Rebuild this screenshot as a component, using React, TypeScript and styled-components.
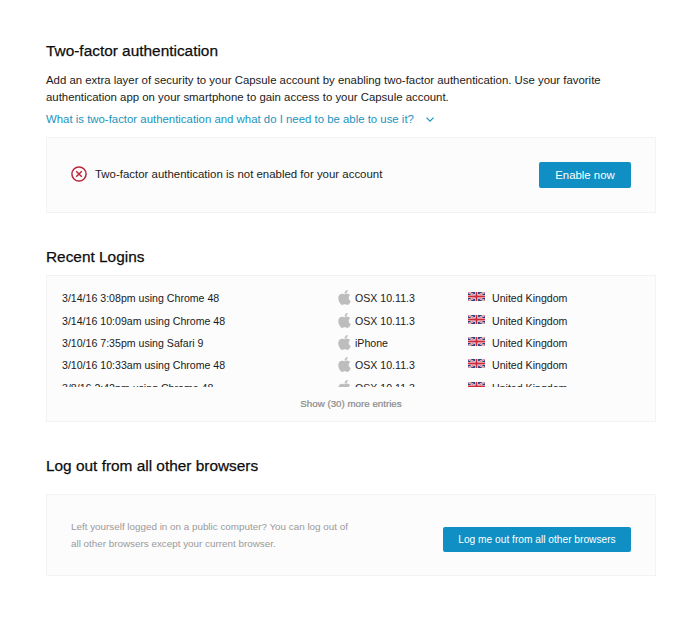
import React from 'react';
import styled, { createGlobalStyle } from 'styled-components';
import { FaApple } from 'react-icons/fa';

const Global = createGlobalStyle`
  html, body { margin: 0; padding: 0; background: #fff; }
  body { font-family: "Liberation Sans", Arial, sans-serif; color: #1c1c1c; }
`;

const Page = styled.main`
  width: 610px;
  padding: 42px 44px 0 46px;
`;

const Section = styled.section<{ $gap: number }>`
  margin-bottom: ${(p) => p.$gap}px;
`;

const Heading = styled.h2<{ $below: number }>`
  margin: 0 0 ${(p) => p.$below}px;
  font-size: 15.4px;
  line-height: 18px;
  font-weight: 400;
  color: #0d0d0d;
  -webkit-text-stroke: 0.25px #0d0d0d;
`;

const Intro = styled.p`
  margin: 0;
  font-size: 11.4px;
  line-height: 17px;
  color: #1a1a1a;
`;

const InfoLink = styled.a`
  display: flex;
  align-items: center;
  gap: 12px;
  margin: 5px 0 9px;
  font-size: 11.4px;
  line-height: 17px;
  color: #1a93bd;
  text-decoration: none;
`;

const Panel = styled.div<{ $height: number }>`
  box-sizing: border-box;
  height: ${(p) => p.$height}px;
  background: #fcfcfc;
  border: 1px solid #f3f3f3;
`;

const ActionPanel = styled(Panel)`
  display: flex;
  align-items: center;
  justify-content: space-between;
  padding: 0 24px;
`;

const Status = styled.div`
  display: flex;
  align-items: center;
  gap: 8px;
  margin-top: -3px;
  font-size: 11.45px;
  color: #1a1a1a;
`;

const Button = styled.button<{ $height: number; $width: number; $size: number; $drop: number }>`
  box-sizing: border-box;
  flex: none;
  width: ${(p) => p.$width}px;
  height: ${(p) => p.$height}px;
  margin-top: ${(p) => p.$drop}px;
  padding: 0;
  border: 0;
  border-radius: 2px;
  background: #0f8fc4;
  color: #fff;
  font: ${(p) => p.$size}px "Liberation Sans", Arial, sans-serif;
  white-space: nowrap;
`;

const Rows = styled.div`
  height: 100px;
  margin-top: 11px;
  padding-left: 15px;
  overflow: hidden;
`;

const Row = styled.div`
  display: grid;
  grid-template-columns: 276px 130px 1fr;
  height: 22.4px;
  align-items: center;
  font-size: 10.6px;
  color: #1a1a1a;
`;

const Cell = styled.span`
  display: flex;
  align-items: center;
`;

const AppleMark = styled(FaApple)`
  width: 13px;
  height: 17px;
  margin-right: 4px;
  margin-top: -1px;
  color: #bdbdbd;
`;

const FlagMark = styled.svg`
  width: 17px;
  height: 9px;
  margin-right: 7px;
  margin-top: -3px;
`;

const ShowMore = styled.div`
  margin-top: 10px;
  text-align: center;
  font-size: 9.75px;
  line-height: 14px;
  color: #8a8a8a;
  -webkit-text-stroke: 0.2px #8a8a8a;
`;

const Note = styled.p`
  margin: 0;
  font-size: 9.85px;
  line-height: 17px;
  color: #9a9a9a;
`;

const Flag = () => (
  <FlagMark viewBox="0 0 60 32" preserveAspectRatio="none" aria-hidden="true">
    <rect width="60" height="32" fill="#2b3f7e" />
    <path d="M0 0L60 32M60 0L0 32" stroke="#fff" strokeWidth="7" />
    <path d="M0 0L60 32M60 0L0 32" stroke="#cc2b3c" strokeWidth="2.5" />
    <path d="M30 0V32M0 16H60" stroke="#fff" strokeWidth="11" />
    <path d="M30 0V32M0 16H60" stroke="#cc2b3c" strokeWidth="6.5" />
  </FlagMark>
);

const logins = [
  ['3/14/16 3:08pm using Chrome 48', 'OSX 10.11.3'],
  ['3/14/16 10:09am using Chrome 48', 'OSX 10.11.3'],
  ['3/10/16 7:35pm using Safari 9', 'iPhone'],
  ['3/10/16 10:33am using Chrome 48', 'OSX 10.11.3'],
  ['3/8/16 2:42pm using Chrome 48', 'OSX 10.11.3'],
];

export default function App() {
  return (
    <Page>
      <Global />
      <Section $gap={35}>
        <Heading $below={12}>Two-factor authentication</Heading>
        <Intro>
          Add an extra layer of security to your Capsule account by enabling two-factor authentication. Use your favorite
          <br />
          authentication app on your smartphone to gain access to your Capsule account.
        </Intro>
        <InfoLink href="#">
          What is two-factor authentication and what do I need to be able to use it?
          <svg width="8" height="5" viewBox="0 0 8 5" fill="none" stroke="#1a93bd" strokeWidth="1.2" aria-hidden="true">
            <path d="M0.5 0.6L4 4.1L7.5 0.6" />
          </svg>
        </InfoLink>
        <ActionPanel $height={76}>
          <Status>
            <svg width="16" height="16" viewBox="0 0 16 16" fill="none" stroke="#b9273a" strokeWidth="1.5" aria-hidden="true">
              <circle cx="8" cy="8" r="7.1" />
              <path d="M5.2 5.2L10.8 10.8M10.8 5.2L5.2 10.8" />
            </svg>
            Two-factor authentication is not enabled for your account
          </Status>
          <Button $width={92} $height={26} $size={11.4} $drop={0}>Enable now</Button>
        </ActionPanel>
      </Section>
      <Section $gap={35}>
        <Heading $below={9}>Recent Logins</Heading>
        <Panel $height={147}>
          <Rows>
            {logins.map(([when, os], i) => (
              <Row key={i}>
                <span>{when}</span>
                <Cell><AppleMark />{os}</Cell>
                <Cell><Flag />United Kingdom</Cell>
              </Row>
            ))}
          </Rows>
          <ShowMore>Show (30) more entries</ShowMore>
        </Panel>
      </Section>
      <Section $gap={0}>
        <Heading $below={19}>Log out from all other browsers</Heading>
        <ActionPanel $height={82}>
          <Note>
            Left yourself logged in on a public computer? You can log out of
            <br />
            all other browsers except your current browser.
          </Note>
          <Button $width={188} $height={25} $size={10.2} $drop={9}>Log me out from all other browsers</Button>
        </ActionPanel>
      </Section>
    </Page>
  );
}
